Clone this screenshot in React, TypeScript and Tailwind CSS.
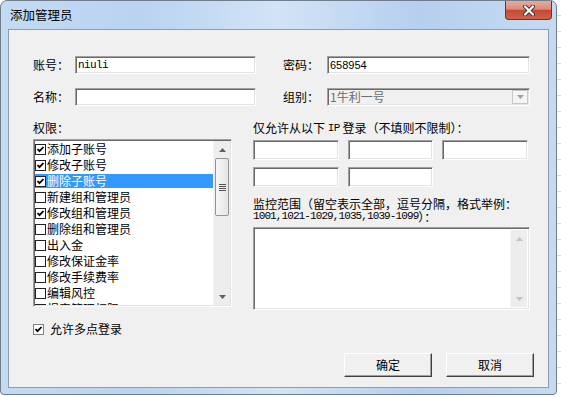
import React from 'react'

const PERMS: [string, boolean][] = [
  ['添加子账号', true],
  ['修改子账号', true],
  ['删除子账号', true],
  ['新建组和管理员', false],
  ['修改组和管理员', true],
  ['删除组和管理员', false],
  ['出入金', false],
  ['修改保证金率', false],
  ['修改手续费率', false],
  ['编辑风控', false],
  ['报表管理权限', false],
]

const SUNKEN =
  'border border-t-[#a0a0a0] border-l-[#a0a0a0] border-r-white border-b-white shadow-[inset_1px_1px_0_#696969,inset_-1px_-1px_0_#e3e3e3]'

function Box({ checked, gray }: { checked: boolean; gray?: boolean }) {
  return (
    <svg width="11" height="11" viewBox="0 0 11 11" className="shrink-0">
      <rect x="0.5" y="0.5" width="10" height="10" fill="#fff" stroke={gray ? '#808080' : '#222'} />
      {checked && <polyline points="2.5,5 4.5,7.2 8.5,3" fill="none" stroke="#000" strokeWidth="1.8" />}
    </svg>
  )
}

function Arrow({ up, color }: { up?: boolean; color: string }) {
  return (
    <svg width="7" height="4" viewBox="0 0 7 4">
      <path d={up ? 'M0 4 L3.5 0 L7 4Z' : 'M0 0 L3.5 4 L7 0Z'} fill={color} />
    </svg>
  )
}

function ScrollBar({ thumb, disabled }: { thumb?: boolean; disabled?: boolean }) {
  const c = disabled ? '#c2c2c2' : '#606060'
  return (
    <div className="w-[17px] h-full flex flex-col bg-[#ededed] border-l border-[#f5f5f5]">
      <div className="h-[17px] flex items-center justify-center">
        <Arrow up color={c} />
      </div>
      <div className="flex-1">
        {thumb && (
          <div className="h-[58px] mx-[1px] rounded-[2px] border border-[#959595] bg-[linear-gradient(to_right,#f6f6f6,#e4e4e4)] flex flex-col items-center justify-center gap-[1px]">
            <div className="w-[7px] h-[1px] bg-[#555]" />
            <div className="w-[7px] h-[1px] bg-[#555]" />
            <div className="w-[7px] h-[1px] bg-[#555]" />
            <div className="w-[7px] h-[1px] bg-[#555]" />
          </div>
        )}
      </div>
      <div className="h-[17px] flex items-center justify-center">
        <Arrow color={c} />
      </div>
    </div>
  )
}

function Field({ w, h = 18, children }: { w: string; h?: number; children?: React.ReactNode }) {
  return (
    <div className={`${w} ${h === 18 ? 'h-[18px]' : 'h-[20px]'} bg-white ${SUNKEN} flex items-center pl-[2px] overflow-hidden`}>
      {children}
    </div>
  )
}

export default function App() {
  return (
    <div className="w-[561px] h-[397px] overflow-hidden bg-[repeating-linear-gradient(to_bottom,#ffffff_0px,#ffffff_15px,#dcdcdc_15px,#dcdcdc_16px)] font-['Noto_Sans_CJK_SC',sans-serif] text-[12px] text-black">
      <div className="w-[557px] h-[395px] flex flex-col rounded-t-[7px] rounded-b-[4px] border border-[#6f7d8d] bg-[linear-gradient(to_right,#c4daf2_0%,#b9d3f0_25%,#d2e3f6_50%,#b6cfee_75%,#c6dbf2_100%)]">
        {/* title bar */}
        <div className="relative h-[28px] shrink-0 pl-[9px] pt-[6px] leading-[16px] text-[12.5px]">
          添加管理员
          <div className="absolute right-[4px] top-0 w-[47px] h-[19px] rounded-b-[4px] border border-t-0 border-[#6b3329] bg-[linear-gradient(to_bottom,#e8aa9c_0%,#dc8c79_45%,#c34a33_52%,#cf6248_100%)] flex items-center justify-center">
            <svg width="14" height="11" viewBox="0 0 14 11">
              <path d="M3 1.5 L11 9.5 M11 1.5 L3 9.5" stroke="#4a2e2a" strokeWidth="4" strokeLinecap="round" />
              <path d="M3 1.5 L11 9.5 M11 1.5 L3 9.5" stroke="#fff" strokeWidth="2.2" strokeLinecap="round" />
            </svg>
          </div>
        </div>

        {/* client area */}
        <div className="flex-1 mx-[7px] mb-[6px] border border-[#8f9cad] bg-[#f0f0f0] pl-[24px] pt-[26px]">
          <div className="flex items-center h-[18px]">
            <span className="w-[42px]">账号：</span>
            <Field w="w-[181px]">
              <span className="font-['Liberation_Mono',monospace] text-[11px] tracking-[-0.6px]">niuli</span>
            </Field>
            <span className="w-[44px] ml-[27px]">密码：</span>
            <Field w="w-[203px]">
              <span className="font-['Liberation_Sans',sans-serif] text-[11px]">658954</span>
            </Field>
          </div>

          <div className="flex items-center h-[18px] mt-[14px]">
            <span className="w-[42px]">名称：</span>
            <Field w="w-[181px]" />
            <span className="w-[44px] ml-[27px]">组别：</span>
            <div className={`w-[203px] h-[18px] bg-[#f0f0f0] ${SUNKEN} flex items-center pl-[2px] pr-[1px]`}>
              <span className="flex-1 text-[#6d6d6d]">1牛利一号</span>
              <div className="w-[16px] h-[14px] border border-[#c8c8c8] bg-[#f4f4f4] flex items-center justify-center">
                <Arrow color="#a0a0a0" />
              </div>
            </div>
          </div>

          <div className="flex gap-[21px] mt-[15px]">
            {/* permissions */}
            <div className="w-[199px] flex flex-col">
              <span className="h-[14px] leading-[14px]">权限：</span>
              <div className={`mt-[4px] h-[168px] bg-white ${SUNKEN} flex p-[1px]`}>
                <div className="flex-1 overflow-hidden">
                  {PERMS.map(([name, on], i) => (
                    <div key={name} className="h-[16px] flex items-center">
                      <div
                        className={`flex-1 h-[14px] flex items-center gap-[1px] ${
                          i === 2 ? 'bg-[#3399ff] text-white' : ''
                        }`}
                      >
                        <Box checked={on} />
                        <span className="leading-[14px] whitespace-nowrap">{name}</span>
                      </div>
                    </div>
                  ))}
                </div>
                <ScrollBar thumb />
              </div>
            </div>

            {/* ip + monitor */}
            <div className="w-[277px] flex flex-col">
              <div className="h-[14px] leading-[14px] whitespace-nowrap flex items-center">
                仅允许从以下&nbsp;
                <span className="font-['Liberation_Mono',monospace] text-[11px] leading-[14px] tracking-[-0.6px]">IP</span>
                &nbsp;登录（不填则不限制）：
              </div>
              <div className="flex gap-[9px] mt-[5px]">
                <Field w="w-[86px]" h={20} />
                <Field w="w-[85px]" h={20} />
                <Field w="w-[86px]" h={20} />
              </div>
              <div className="flex gap-[9px] mt-[7px]">
                <Field w="w-[86px]" h={20} />
                <Field w="w-[85px]" h={20} />
              </div>
              <div className="mt-[10px] whitespace-nowrap">
                <div className="h-[13px] leading-[13px]">监控范围（留空表示全部，逗号分隔，格式举例：</div>
                <div className="h-[13px] leading-[13px] flex items-center">
                  <span className="font-['Liberation_Mono',monospace] text-[11px] leading-[13px] tracking-[-0.9px]">1001,1021-1029,1035,1039-1099</span>
                  ）：
                </div>
              </div>
              <div className={`mt-[4px] h-[83px] bg-white ${SUNKEN} flex justify-end p-[2px]`}>
                <ScrollBar disabled />
              </div>
            </div>
          </div>

          <div className="flex items-center gap-[6px] mt-[12px] h-[14px]">
            <Box checked gray />
            <span>允许多点登录</span>
          </div>

          <div className="flex gap-[14px] pl-[311px] mt-[17px]">
            <button className="w-[88px] h-[24px] bg-[#f0f0f0] border border-t-white border-l-white border-r-[#404040] border-b-[#404040] shadow-[inset_-1px_-1px_0_#a0a0a0]">
              确定
            </button>
            <button className="w-[88px] h-[24px] bg-[#f0f0f0] border border-t-white border-l-white border-r-[#404040] border-b-[#404040] shadow-[inset_-1px_-1px_0_#a0a0a0]">
              取消
            </button>
          </div>
        </div>
      </div>
    </div>
  )
}
